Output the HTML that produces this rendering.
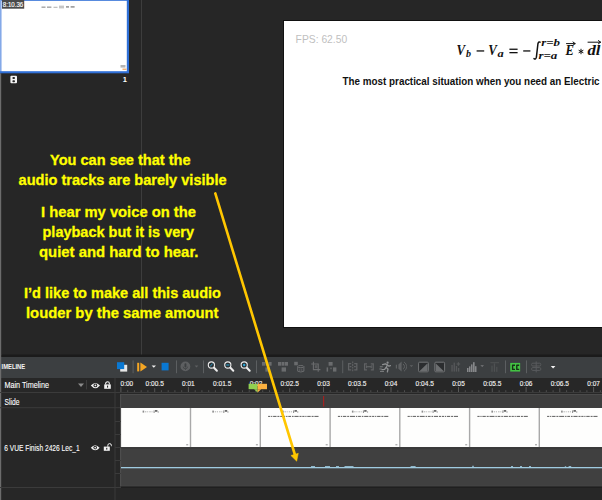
<!DOCTYPE html>
<html>
<head>
<meta charset="utf-8">
<title>Timeline audio question</title>
<style>
html,body{margin:0;padding:0;background:#262626;}
body{width:602px;height:500px;overflow:hidden;position:relative;font-family:"Liberation Sans",sans-serif;}
svg{position:absolute;left:0;top:0;display:block;}
text{font-family:"Liberation Sans",sans-serif;}
.ser{font-family:"Liberation Serif",serif;}
</style>
</head>
<body>
<svg width="602" height="500" viewBox="0 0 602 500">
  <!-- ===== base ===== -->
  <rect x="0" y="0" width="602" height="500" fill="#262626"/>
  <!-- left edge light line -->
  <rect x="0" y="73.3" width="1.2" height="427" fill="#6c6c6c"/>
  <!-- panel divider -->
  <rect x="141" y="0" width="1" height="355" fill="#3d3d3d"/>

  <!-- ===== slide thumbnail ===== -->
  <g id="thumb">
    <rect x="0" y="0" width="129" height="73.3" fill="#2f6fd6"/>
    <rect x="0" y="0" width="1.4" height="71.2" fill="#84a9e8"/>
    <rect x="1.4" y="0.8" width="125.4" height="70.4" fill="#ffffff"/>
    <rect x="2" y="0" width="22.2" height="8.7" fill="#4a4a4a"/>
    <text x="2.8" y="7" font-size="7.6" fill="#ffffff" stroke="#ffffff" stroke-width=".15" textLength="20.4" lengthAdjust="spacingAndGlyphs">8:10.36</text>
    <!-- mini formula -->
    <rect x="41.5" y="6.6" width="4" height="1.1" fill="#8a8a8a"/><rect x="47" y="6.6" width="4.4" height="1.1" fill="#8a8a8a"/>
    <rect x="53.5" y="6.8" width="4" height=".9" fill="#a5a5a5"/>
    <rect x="59" y="5.6" width="5" height="2.8" fill="#a0a0a0" opacity=".6"/>
    <rect x="66" y="6.2" width="3" height="1.4" fill="#8a8a8a"/><rect x="70.6" y="6.2" width="4" height="1.4" fill="#8a8a8a"/>
    <!-- corner mark -->
    <rect x="120.5" y="65" width="5" height="2.6" fill="#b5b5b5"/>
    <rect x="122.5" y="68.5" width="4" height="1.5" fill="#f0b27a"/>
    <!-- film icon + number -->
    <rect x="10.4" y="75.8" width="6.6" height="7.5" rx="1" fill="#f4f4f4"/>
    <rect x="12.4" y="77" width="2.6" height="2" rx=".9" fill="#262626"/>
    <rect x="12.4" y="80.2" width="2.6" height="2" rx=".9" fill="#262626"/>
    <text x="122.8" y="81.6" font-size="7.5" font-weight="bold" fill="#ffffff">1</text>
  </g>

  <!-- ===== canvas slide ===== -->
  <g id="slide">
    <rect x="283" y="20" width="319" height="308" fill="#111111"/>
    <rect x="284" y="21" width="318" height="306" fill="#ffffff"/>
    <text x="295.6" y="43.1" font-size="10.1" fill="#bfbfbf" textLength="51.6" lengthAdjust="spacingAndGlyphs">FPS: 62.50</text>
    <!-- formula -->
    <g class="ser" font-weight="bold" font-style="italic" fill="#111111">
      <text class="ser" x="456.6" y="54.6" font-size="13.6" textLength="8.6" lengthAdjust="spacingAndGlyphs">V</text>
      <text class="ser" x="466" y="57.4" font-size="10.6" textLength="5" lengthAdjust="spacingAndGlyphs">b</text>
      <text class="ser" x="488.2" y="54.6" font-size="13.6" textLength="8.6" lengthAdjust="spacingAndGlyphs">V</text>
      <text class="ser" x="497.4" y="57.4" font-size="10.6" textLength="6.2" lengthAdjust="spacingAndGlyphs">a</text>
      <text class="ser" x="541.2" y="45.8" font-size="9.8" textLength="18.8" lengthAdjust="spacingAndGlyphs">r=b</text>
      <text class="ser" x="538.4" y="59.4" font-size="9.8" textLength="19" lengthAdjust="spacingAndGlyphs">r=a</text>
      <text class="ser" x="565.6" y="54.6" font-size="13.6" textLength="8.4" lengthAdjust="spacingAndGlyphs">E</text>
      <text class="ser" x="587.4" y="54.6" font-size="13.6" textLength="13" lengthAdjust="spacingAndGlyphs">dl</text>
    </g>
    <g fill="#111111" stroke="none">
      <rect x="476.6" y="50.3" width="7.6" height="1.3"/>
      <rect x="509.4" y="48.6" width="8.2" height="1.3"/>
      <rect x="509.4" y="52" width="8.2" height="1.3"/>
      <rect x="523.2" y="50.3" width="7.2" height="1.3"/>
    </g>
    <path d="M534 58.6 q1.8 1.2 2.4 -1.4 l1.5 -13.2 q.5 -2.8 2.2 -1.8" fill="none" stroke="#111111" stroke-width="1.5" stroke-linecap="round"/>
    <!-- asterisk -->
    <g stroke="#111111" stroke-width="1" stroke-linecap="round">
      <path d="M581 49.2 v4.6 M579 50.4 l4 2.2 M583 50.4 l-4 2.2"/>
    </g>
    <!-- vector arrows -->
    <g stroke="#111111" stroke-width="1" fill="none" stroke-linecap="round" stroke-linejoin="round">
      <path d="M566.5 43.6 h8.6 M573 42 l2.2 1.6 l-2.2 1.6"/>
      <path d="M588 42.2 h12.6 M598.4 40.6 l2.2 1.6 l-2.2 1.6"/>
    </g>
    <text x="342.6" y="84.8" font-size="10.9" font-weight="bold" fill="#111111" textLength="257" lengthAdjust="spacingAndGlyphs">The most practical situation when you need an Electric</text>
  </g>

  <!-- ===== timeline panel ===== -->
  <g id="timeline">
    <rect x="0" y="354.5" width="602" height="2.5" fill="#1b1b1b"/>
    <rect x="0" y="357" width="602" height="21" fill="#3c3f41"/>
    <rect x="0" y="378" width="602" height="122" fill="#272727"/>
    <rect x="0" y="354" width="1.2" height="146" fill="#6c6c6c"/>
    <text x="1.6" y="369.3" font-size="7.3" font-weight="bold" fill="#f4f4f4" textLength="23.6" lengthAdjust="spacingAndGlyphs">IMELINE</text>
    <!-- grid lines -->
    <rect x="0" y="392" width="602" height="1" fill="#3b3b3b"/>
    <rect x="0" y="407.2" width="120.4" height="1" fill="#3b3b3b"/>
    <rect x="0" y="487" width="121" height="1" fill="#3b3b3b"/>
    <rect x="114.5" y="378" width="1" height="122" fill="#3b3b3b"/>
    <!-- ruler -->
    <g id="ruler" font-size="7.5" fill="#f0f0f0" stroke="#f0f0f0" stroke-width=".15">
      <g stroke="none"><rect x="120.4" y="387" width="1" height="5" fill="#5a5a5a"/><rect x="127.2" y="390.2" width="1" height="1.8" fill="#4e4e4e"/><rect x="133.9" y="390.2" width="1" height="1.8" fill="#4e4e4e"/><rect x="140.7" y="390.2" width="1" height="1.8" fill="#4e4e4e"/><rect x="147.4" y="390.2" width="1" height="1.8" fill="#4e4e4e"/><rect x="154.2" y="388.2" width="1" height="3.8" fill="#555555"/><rect x="160.9" y="390.2" width="1" height="1.8" fill="#4e4e4e"/><rect x="167.7" y="390.2" width="1" height="1.8" fill="#4e4e4e"/><rect x="174.4" y="390.2" width="1" height="1.8" fill="#4e4e4e"/><rect x="181.2" y="390.2" width="1" height="1.8" fill="#4e4e4e"/><rect x="187.9" y="387" width="1" height="5" fill="#5a5a5a"/><rect x="194.7" y="390.2" width="1" height="1.8" fill="#4e4e4e"/><rect x="201.4" y="390.2" width="1" height="1.8" fill="#4e4e4e"/><rect x="208.2" y="390.2" width="1" height="1.8" fill="#4e4e4e"/><rect x="214.9" y="390.2" width="1" height="1.8" fill="#4e4e4e"/><rect x="221.7" y="388.2" width="1" height="3.8" fill="#555555"/><rect x="228.4" y="390.2" width="1" height="1.8" fill="#4e4e4e"/><rect x="235.2" y="390.2" width="1" height="1.8" fill="#4e4e4e"/><rect x="242.0" y="390.2" width="1" height="1.8" fill="#4e4e4e"/><rect x="248.7" y="390.2" width="1" height="1.8" fill="#4e4e4e"/><rect x="255.5" y="387" width="1" height="5" fill="#5a5a5a"/><rect x="262.2" y="390.2" width="1" height="1.8" fill="#4e4e4e"/><rect x="269.0" y="390.2" width="1" height="1.8" fill="#4e4e4e"/><rect x="275.7" y="390.2" width="1" height="1.8" fill="#4e4e4e"/><rect x="282.5" y="390.2" width="1" height="1.8" fill="#4e4e4e"/><rect x="289.2" y="388.2" width="1" height="3.8" fill="#555555"/><rect x="296.0" y="390.2" width="1" height="1.8" fill="#4e4e4e"/><rect x="302.7" y="390.2" width="1" height="1.8" fill="#4e4e4e"/><rect x="309.5" y="390.2" width="1" height="1.8" fill="#4e4e4e"/><rect x="316.2" y="390.2" width="1" height="1.8" fill="#4e4e4e"/><rect x="323.0" y="387" width="1" height="5" fill="#5a5a5a"/><rect x="329.7" y="390.2" width="1" height="1.8" fill="#4e4e4e"/><rect x="336.5" y="390.2" width="1" height="1.8" fill="#4e4e4e"/><rect x="343.2" y="390.2" width="1" height="1.8" fill="#4e4e4e"/><rect x="350.0" y="390.2" width="1" height="1.8" fill="#4e4e4e"/><rect x="356.8" y="388.2" width="1" height="3.8" fill="#555555"/><rect x="363.5" y="390.2" width="1" height="1.8" fill="#4e4e4e"/><rect x="370.3" y="390.2" width="1" height="1.8" fill="#4e4e4e"/><rect x="377.0" y="390.2" width="1" height="1.8" fill="#4e4e4e"/><rect x="383.8" y="390.2" width="1" height="1.8" fill="#4e4e4e"/><rect x="390.5" y="387" width="1" height="5" fill="#5a5a5a"/><rect x="397.3" y="390.2" width="1" height="1.8" fill="#4e4e4e"/><rect x="404.0" y="390.2" width="1" height="1.8" fill="#4e4e4e"/><rect x="410.8" y="390.2" width="1" height="1.8" fill="#4e4e4e"/><rect x="417.5" y="390.2" width="1" height="1.8" fill="#4e4e4e"/><rect x="424.3" y="388.2" width="1" height="3.8" fill="#555555"/><rect x="431.0" y="390.2" width="1" height="1.8" fill="#4e4e4e"/><rect x="437.8" y="390.2" width="1" height="1.8" fill="#4e4e4e"/><rect x="444.5" y="390.2" width="1" height="1.8" fill="#4e4e4e"/><rect x="451.3" y="390.2" width="1" height="1.8" fill="#4e4e4e"/><rect x="458.0" y="387" width="1" height="5" fill="#5a5a5a"/><rect x="464.8" y="390.2" width="1" height="1.8" fill="#4e4e4e"/><rect x="471.6" y="390.2" width="1" height="1.8" fill="#4e4e4e"/><rect x="478.3" y="390.2" width="1" height="1.8" fill="#4e4e4e"/><rect x="485.1" y="390.2" width="1" height="1.8" fill="#4e4e4e"/><rect x="491.8" y="388.2" width="1" height="3.8" fill="#555555"/><rect x="498.6" y="390.2" width="1" height="1.8" fill="#4e4e4e"/><rect x="505.3" y="390.2" width="1" height="1.8" fill="#4e4e4e"/><rect x="512.1" y="390.2" width="1" height="1.8" fill="#4e4e4e"/><rect x="518.8" y="390.2" width="1" height="1.8" fill="#4e4e4e"/><rect x="525.6" y="387" width="1" height="5" fill="#5a5a5a"/><rect x="532.3" y="390.2" width="1" height="1.8" fill="#4e4e4e"/><rect x="539.1" y="390.2" width="1" height="1.8" fill="#4e4e4e"/><rect x="545.8" y="390.2" width="1" height="1.8" fill="#4e4e4e"/><rect x="552.6" y="390.2" width="1" height="1.8" fill="#4e4e4e"/><rect x="559.3" y="388.2" width="1" height="3.8" fill="#555555"/><rect x="566.1" y="390.2" width="1" height="1.8" fill="#4e4e4e"/><rect x="572.9" y="390.2" width="1" height="1.8" fill="#4e4e4e"/><rect x="579.6" y="390.2" width="1" height="1.8" fill="#4e4e4e"/><rect x="586.4" y="390.2" width="1" height="1.8" fill="#4e4e4e"/><rect x="593.1" y="387" width="1" height="5" fill="#5a5a5a"/><rect x="599.9" y="390.2" width="1" height="1.8" fill="#4e4e4e"/></g>
      <text x="120.6" y="386.2" textLength="12.6" lengthAdjust="spacingAndGlyphs">0:00</text>
      <text x="145.5" y="386.2" textLength="18.3" lengthAdjust="spacingAndGlyphs">0:00.5</text>
      <text x="182.1" y="386.2" textLength="12.6" lengthAdjust="spacingAndGlyphs">0:01</text>
      <text x="213.0" y="386.2" textLength="18.3" lengthAdjust="spacingAndGlyphs">0:01.5</text>
      <text x="249.7" y="386.2" textLength="12.6" lengthAdjust="spacingAndGlyphs">0:02</text>
      <text x="280.6" y="386.2" textLength="18.3" lengthAdjust="spacingAndGlyphs">0:02.5</text>
      <text x="317.2" y="386.2" textLength="12.6" lengthAdjust="spacingAndGlyphs">0:03</text>
      <text x="348.1" y="386.2" textLength="18.3" lengthAdjust="spacingAndGlyphs">0:03.5</text>
      <text x="384.7" y="386.2" textLength="12.6" lengthAdjust="spacingAndGlyphs">0:04</text>
      <text x="415.6" y="386.2" textLength="18.3" lengthAdjust="spacingAndGlyphs">0:04.5</text>
      <text x="452.2" y="386.2" textLength="12.6" lengthAdjust="spacingAndGlyphs">0:05</text>
      <text x="483.2" y="386.2" textLength="18.3" lengthAdjust="spacingAndGlyphs">0:05.5</text>
      <text x="519.8" y="386.2" textLength="12.6" lengthAdjust="spacingAndGlyphs">0:06</text>
      <text x="550.7" y="386.2" textLength="18.3" lengthAdjust="spacingAndGlyphs">0:06.5</text>
      <text x="587.3" y="386.2" textLength="12.6" lengthAdjust="spacingAndGlyphs">0:07</text>
    </g>
    <!-- slide track -->
    <rect x="121" y="394" width="481" height="14" fill="#3e3e3e"/>
    <rect x="121" y="394" width="481" height="1" fill="#4a4a4a"/>
    <rect x="323" y="396" width="1.2" height="10.5" fill="#a3201f"/>
    <!-- video frames -->
    <rect x="121" y="408" width="481" height="39.4" fill="#fefefd"/>
    <rect x="142.6" y="410.6" width="1.6" height="2" fill="#8a8a8a"/><path d="M145.0 411.8 h8" stroke="#b0b0b0" stroke-width="1" stroke-dasharray="1.4 .8 1 1.1 1.4 .8 1 .9" fill="none"/><rect x="153.6" y="410.4" width="1" height="2.6" fill="#8a8a8a"/><rect x="155.0" y="410" width="2.4" height="1.8" fill="#6a6a6a"/><rect x="157.6" y="411.4" width="1.2" height="1.2" fill="#9a9a9a"/>
    <rect x="186.2" y="444" width="2" height="1.4" fill="#b3b3b3"/>
    <rect x="189.8" y="408" width="1.4" height="39.4" fill="#a9a9a9"/>
    <rect x="212.3" y="410.6" width="1.6" height="2" fill="#8a8a8a"/><path d="M214.8 411.8 h8" stroke="#b0b0b0" stroke-width="1" stroke-dasharray="1.4 .8 1 1.1 1.4 .8 1 .9" fill="none"/><rect x="223.3" y="410.4" width="1" height="2.6" fill="#8a8a8a"/><rect x="224.8" y="410" width="2.4" height="1.8" fill="#6a6a6a"/><rect x="227.3" y="411.4" width="1.2" height="1.2" fill="#9a9a9a"/>
    <rect x="255.9" y="444" width="2" height="1.4" fill="#b3b3b3"/>
    <rect x="259.6" y="408" width="1.4" height="39.4" fill="#a9a9a9"/>
    <rect x="282.1" y="410.6" width="1.6" height="2" fill="#8a8a8a"/><path d="M284.5 411.8 h8" stroke="#b0b0b0" stroke-width="1" stroke-dasharray="1.4 .8 1 1.1 1.4 .8 1 .9" fill="none"/><rect x="293.1" y="410.4" width="1" height="2.6" fill="#8a8a8a"/><rect x="294.5" y="410" width="2.4" height="1.8" fill="#6a6a6a"/><rect x="297.1" y="411.4" width="1.2" height="1.2" fill="#9a9a9a"/>
    <path d="M268.1 416.4 h50.4" stroke="#4a4a4a" stroke-width=".9" stroke-dasharray="2.2 .8 1.2 .8 3.4 .9 2 .8 5 .9 1.4 .8 2.8 .9 1.6 .8 4.2 .9 2 .8" fill="none"/>
    <rect x="325.7" y="444" width="2" height="1.4" fill="#b3b3b3"/>
    <rect x="329.4" y="408" width="1.4" height="39.4" fill="#a9a9a9"/>
    <rect x="351.9" y="410.6" width="1.6" height="2" fill="#8a8a8a"/><path d="M354.2 411.8 h8" stroke="#b0b0b0" stroke-width="1" stroke-dasharray="1.4 .8 1 1.1 1.4 .8 1 .9" fill="none"/><rect x="362.9" y="410.4" width="1" height="2.6" fill="#8a8a8a"/><rect x="364.2" y="410" width="2.4" height="1.8" fill="#6a6a6a"/><rect x="366.9" y="411.4" width="1.2" height="1.2" fill="#9a9a9a"/>
    <path d="M337.9 416.4 h50.4" stroke="#4a4a4a" stroke-width=".9" stroke-dasharray="2.2 .8 1.2 .8 3.4 .9 2 .8 5 .9 1.4 .8 2.8 .9 1.6 .8 4.2 .9 2 .8" fill="none"/>
    <rect x="395.4" y="444" width="2" height="1.4" fill="#b3b3b3"/>
    <rect x="399.1" y="408" width="1.4" height="39.4" fill="#a9a9a9"/>
    <rect x="421.6" y="410.6" width="1.6" height="2" fill="#8a8a8a"/><path d="M424.0 411.8 h8" stroke="#b0b0b0" stroke-width="1" stroke-dasharray="1.4 .8 1 1.1 1.4 .8 1 .9" fill="none"/><rect x="432.6" y="410.4" width="1" height="2.6" fill="#8a8a8a"/><rect x="434.0" y="410" width="2.4" height="1.8" fill="#6a6a6a"/><rect x="436.6" y="411.4" width="1.2" height="1.2" fill="#9a9a9a"/>
    <path d="M407.6 416.4 h50.4" stroke="#4a4a4a" stroke-width=".9" stroke-dasharray="2.2 .8 1.2 .8 3.4 .9 2 .8 5 .9 1.4 .8 2.8 .9 1.6 .8 4.2 .9 2 .8" fill="none"/>
    <rect x="465.2" y="444" width="2" height="1.4" fill="#b3b3b3"/>
    <rect x="468.9" y="408" width="1.4" height="39.4" fill="#a9a9a9"/>
    <rect x="491.4" y="410.6" width="1.6" height="2" fill="#8a8a8a"/><path d="M493.8 411.8 h8" stroke="#b0b0b0" stroke-width="1" stroke-dasharray="1.4 .8 1 1.1 1.4 .8 1 .9" fill="none"/><rect x="502.4" y="410.4" width="1" height="2.6" fill="#8a8a8a"/><rect x="503.8" y="410" width="2.4" height="1.8" fill="#6a6a6a"/><rect x="506.4" y="411.4" width="1.2" height="1.2" fill="#9a9a9a"/>
    <path d="M477.4 416.4 h50.4" stroke="#4a4a4a" stroke-width=".9" stroke-dasharray="2.2 .8 1.2 .8 3.4 .9 2 .8 5 .9 1.4 .8 2.8 .9 1.6 .8 4.2 .9 2 .8" fill="none"/>
    <rect x="535.0" y="444" width="2" height="1.4" fill="#b3b3b3"/>
    <rect x="538.6" y="408" width="1.4" height="39.4" fill="#a9a9a9"/>
    <rect x="561.1" y="410.6" width="1.6" height="2" fill="#8a8a8a"/><path d="M563.5 411.8 h8" stroke="#b0b0b0" stroke-width="1" stroke-dasharray="1.4 .8 1 1.1 1.4 .8 1 .9" fill="none"/><rect x="572.1" y="410.4" width="1" height="2.6" fill="#8a8a8a"/><rect x="573.5" y="410" width="2.4" height="1.8" fill="#6a6a6a"/><rect x="576.1" y="411.4" width="1.2" height="1.2" fill="#9a9a9a"/>
    <path d="M547.1 416.4 h50.4" stroke="#4a4a4a" stroke-width=".9" stroke-dasharray="2.2 .8 1.2 .8 3.4 .9 2 .8 5 .9 1.4 .8 2.8 .9 1.6 .8 4.2 .9 2 .8" fill="none"/>
    <rect x="604.7" y="444" width="2" height="1.4" fill="#b3b3b3"/>
    <rect x="608.4" y="408" width="1.4" height="39.4" fill="#a9a9a9"/>
    <rect x="630.9" y="410.6" width="1.6" height="2" fill="#8a8a8a"/><path d="M633.2 411.8 h8" stroke="#b0b0b0" stroke-width="1" stroke-dasharray="1.4 .8 1 1.1 1.4 .8 1 .9" fill="none"/><rect x="641.9" y="410.4" width="1" height="2.6" fill="#8a8a8a"/><rect x="643.2" y="410" width="2.4" height="1.8" fill="#6a6a6a"/><rect x="645.9" y="411.4" width="1.2" height="1.2" fill="#9a9a9a"/>
    <path d="M616.9 416.4 h50.4" stroke="#4a4a4a" stroke-width=".9" stroke-dasharray="2.2 .8 1.2 .8 3.4 .9 2 .8 5 .9 1.4 .8 2.8 .9 1.6 .8 4.2 .9 2 .8" fill="none"/>
    <rect x="674.5" y="444" width="2" height="1.4" fill="#b3b3b3"/>
    <!-- audio -->
    <rect x="121" y="447.2" width="481" height="1.1" fill="#2c2c2c"/>
    <rect x="121" y="448.2" width="481" height="38.3" fill="#404040"/>
    <rect x="121" y="485.7" width="481" height=".8" fill="#4b4b4b"/>
    <rect x="121" y="486.5" width="481" height="1.5" fill="#1f1f1f"/>
    <rect x="120.2" y="394" width=".9" height="92.5" fill="#585858"/>
    <rect x="121" y="467" width="481" height="1.3" fill="#9fcbe0"/>
    <!-- tiny waveform bumps -->
    <g fill="#9fcbe0" opacity=".85">
      <rect x="311" y="466" width="4" height="1"/><rect x="325" y="466" width="5" height="1"/><rect x="336" y="466" width="3" height="1"/><rect x="344.5" y="466" width="9" height="1"/>
      <rect x="410.6" y="466" width="5" height="1"/><rect x="472" y="465.8" width="2" height="1"/><rect x="511" y="466" width="2" height="1"/><rect x="520" y="466" width="2" height="1"/><rect x="529" y="466" width="2" height="1"/><rect x="564.8" y="466.2" width="1.4" height="1"/><rect x="568.6" y="466" width="2.6" height="1.2"/>
    </g>
    <!-- small scale ticks -->
    <g fill="#3b3b3b"><rect x="115" y="421" width="6" height="1"/><rect x="115" y="434" width="6" height="1"/><rect x="115" y="447" width="6" height="1"/><rect x="115" y="460" width="6" height="1"/><rect x="115" y="473" width="6" height="1"/></g>
    <!-- left labels -->
    <g font-size="8.7" fill="#ffffff" stroke="#ffffff" stroke-width=".1">
      <text x="4.4" y="388" textLength="44.6" lengthAdjust="spacingAndGlyphs">Main Timeline</text>
      <text x="4.4" y="404.6" textLength="15" lengthAdjust="spacingAndGlyphs">Slide</text>
      <text x="4.2" y="451.2" textLength="75.6" lengthAdjust="spacingAndGlyphs">6 VUE Finish 2426 Lec_1</text>
    </g>
  </g>

  <!-- ===== yellow annotation ===== -->
  <g id="note" font-weight="bold" font-size="15.2" fill="#ffff00" stroke="#ffff00" stroke-width=".3">
    <text x="50" y="164.8" textLength="140.6" lengthAdjust="spacingAndGlyphs">You can see that the</text>
    <text x="18.6" y="185" textLength="208" lengthAdjust="spacingAndGlyphs">audio tracks are barely visible</text>
    <text x="41" y="216.9" textLength="155" lengthAdjust="spacingAndGlyphs">I hear my voice on the</text>
    <text x="42.5" y="236.8" textLength="151.5" lengthAdjust="spacingAndGlyphs">playback but it is very</text>
    <text x="39" y="256.6" textLength="159.5" lengthAdjust="spacingAndGlyphs">quiet and hard to hear.</text>
    <text x="24" y="297.6" textLength="197" lengthAdjust="spacingAndGlyphs">I’d like to make all this audio</text>
    <text x="26" y="318.3" textLength="192.5" lengthAdjust="spacingAndGlyphs">louder by the same amount</text>
  </g>
  <!-- ===== toolbar icons ===== -->
  <g id="tools">
    <!-- layers icon -->
    <rect x="120.2" y="364.8" width="7" height="6.8" fill="#e6e6e6"/>
    <rect x="117" y="362.2" width="7.2" height="6.9" fill="#0a78d2"/>
    <rect x="132.6" y="360.4" width="1" height="12.8" fill="#5c5f61"/>
    <!-- play -->
    <rect x="137.2" y="362.8" width="2" height="8.6" fill="#f5a623"/>
    <path d="M140.4 362.6 L147 367.1 L140.4 371.6 Z" fill="#f5a623"/>
    <path d="M151.6 365.4 h4.4 l-2.2 2.4 z" fill="#f0f0f0"/>
    <!-- stop -->
    <rect x="161.6" y="362.8" width="7" height="7.6" fill="#0a78d2"/>
    <rect x="176" y="360.4" width="1" height="12.8" fill="#5c5f61"/>
    <!-- mic (disabled) -->
    <circle cx="185.4" cy="366.4" r="4.9" fill="#5d5f61"/>
    <rect x="184.5" y="363.2" width="1.9" height="4.2" rx=".9" fill="#3c3f41"/>
    <path d="M183.2 366.6 a2.2 2.2 0 0 0 4.4 0" fill="none" stroke="#3c3f41" stroke-width=".7"/>
    <rect x="185.1" y="368.6" width=".7" height="1.3" fill="#3c3f41"/>
    <path d="M194.6 365.4 h3.8 l-1.9 2 z" fill="#5d5f61"/>
    <rect x="203" y="360.4" width="1" height="12.8" fill="#5c5f61"/>
    <!-- magnifiers -->
    <g id="mag1">
      <path d="M213.8 367.5 L216.9 370.7" stroke="#ededed" stroke-width="2" stroke-linecap="round"/>
      <circle cx="211.4" cy="365" r="3.1" fill="#2b3033" stroke="#ececec" stroke-width="1.1"/>
      <path d="M210.2 366.2 l2.4 -2.4" stroke="#2aa7d8" stroke-width="1"/>
    </g>
    <g id="mag2">
      <path d="M230.2 367.5 L233.3 370.7" stroke="#ededed" stroke-width="2" stroke-linecap="round"/>
      <circle cx="227.8" cy="365" r="3.1" fill="#2b3033" stroke="#ececec" stroke-width="1.1"/>
      <rect x="226.2" y="364.5" width="3.2" height="1" fill="#2aa7d8"/>
    </g>
    <g id="mag3">
      <path d="M246.6 367.5 L249.7 370.7" stroke="#ededed" stroke-width="2" stroke-linecap="round"/>
      <circle cx="244.2" cy="365" r="3.1" fill="#2b3033" stroke="#ececec" stroke-width="1.1"/>
      <circle cx="244.2" cy="365" r="1.2" fill="#2aa7d8"/>
    </g>
    <rect x="256" y="360.4" width="1" height="12.8" fill="#5c5f61"/>
    <!-- disabled block icons -->
    <g fill="#6a6c6e">
      <rect x="262" y="362" width="3" height="3.7"/><rect x="265.5" y="362" width="3" height="3.7"/><rect x="269" y="362" width="2.6" height="3.7"/>
      <rect x="265.4" y="367.4" width="4.2" height="4.2"/>
      <rect x="278" y="362" width="3" height="3.7"/><rect x="281.5" y="362" width="3" height="3.7"/><rect x="285" y="362" width="3" height="3.7"/>
      <rect x="281.6" y="367.4" width="4.4" height="4.2"/>
      <rect x="294.2" y="361.8" width="3.6" height="3.5"/>
      <rect x="328.6" y="362" width="4" height="3.7"/>
      <rect x="326.6" y="367.4" width="1.5" height="4.2"/><rect x="330.4" y="367.6" width="1.2" height="1.6"/><rect x="333" y="367.4" width="3.4" height="4.2"/>
    </g>
    <!-- trash -->
    <g fill="none" stroke="#6a6c6e" stroke-width="1">
      <ellipse cx="300.8" cy="366.6" rx="3.1" ry="1.1"/>
      <path d="M297.7 366.6 v4.6 q3.1 1.6 6.2 0 v-4.6"/>
      <path d="M299.8 368.6 v2.4 M301.8 368.6 v2.4" stroke-width=".7"/>
    </g>
    <!-- crop -->
    <g fill="none" stroke="#6a6c6e" stroke-width="1.1">
      <path d="M313.4 361.8 v7.8 h7 M311.2 364 h7 v7.8"/>
      <rect x="314.8" y="365.2" width="2.6" height="3" fill="#5a5c5e" stroke="none"/>
    </g>
    <rect x="342.2" y="360.4" width="1" height="12.8" fill="#5c5f61"/>
    <!-- split -->
    <g fill="none" stroke="#606264" stroke-width="1.3">
      <path d="M351.2 363.6 h-2.6 v6.2 h2.6 M354.2 363.6 h2.6 v6.2 h-2.6"/>
      <path d="M352.7 361.4 v10.6" stroke-dasharray="1.8 .9" stroke-width="1.1"/>
      <path d="M349.6 366.7 h1.8 M354 366.7 h1.8" stroke-width="1.2"/>
    </g>
    <!-- join -->
    <g fill="none" stroke="#606264" stroke-width="1.3">
      <path d="M367 363.8 h-2.4 v6 h2.4 M370.8 363.8 h2.4 v6 h-2.4"/>
      <path d="M366 364.9 l2.2 1.8 l-2.2 1.8 z M371.8 364.9 l-2.2 1.8 l2.2 1.8 z" fill="#606264" stroke="none"/>
      <path d="M367.6 366.7 h2.6" stroke-width="1.2"/>
    </g>
    <!-- runner -->
    <g fill="none" stroke="#8e9092" stroke-width="1.3" stroke-linecap="round" stroke-linejoin="round">
      <circle cx="387.6" cy="362.7" r="1.1" fill="#8e9092" stroke="none"/>
      <path d="M382.6 364.6 l2.8 -.8 l2 1.2 l-1.2 2.6 l1.8 1.4 l-.6 2.8"/>
      <path d="M386.2 367.4 l-1.6 2 l-2.6 .2"/>
      <path d="M387.4 365 l1.6 1.2 l1.4 -.6"/>
      <path d="M380.2 366.8 h2.2 M379.8 369 h1.6 M380.4 371.4 h3.2" stroke-width=".8"/>
    </g>
    <!-- volume -->
    <g fill="none" stroke="#5f6163" stroke-width="1">
      <path d="M396.4 364.8 v3.6" stroke-width="1.2"/>
      <path d="M401.6 361.6 v10 l-3.2 -2.8 v-4.4 z" fill="#5f6163" stroke="none"/>
      <path d="M403 364 a3 3 0 0 1 0 5.2"/>
      <path d="M404 362 a5.4 5.4 0 0 1 0 9.2"/>
    </g>
    <path d="M409.6 365.2 h3.6 l-1.8 1.9 z" fill="#5f6163"/>
    <!-- fade in / fade out -->
    <rect x="418.6" y="362.2" width="9.8" height="9.6" rx="1" fill="#2b2d2f" stroke="#737577" stroke-width="1"/>
    <path d="M419.6 371 L427.6 363.2 V371 Z" fill="#6c6e70"/>
    <rect x="434.8" y="362.2" width="9.8" height="9.6" rx="1" fill="#2b2d2f" stroke="#737577" stroke-width="1"/>
    <path d="M435.6 363.2 L443.6 371 H435.6 Z" fill="#6c6e70"/>
    <!-- bars + -->
    <g fill="#56585a">
      <rect x="451.4" y="365" width="1.3" height="6.6"/><rect x="453.6" y="362.6" width="1.3" height="9"/><rect x="455.8" y="366" width="1.3" height="5.6"/><rect x="458" y="368" width="1.3" height="3.6"/>
      <rect x="456.6" y="363.4" width="3.6" height="1.2"/><rect x="457.8" y="362.2" width="1.2" height="3.6"/>
    </g>
    <!-- bars ascending -->
    <g fill="#999b9d">
      <rect x="467.2" y="368" width="1.2" height="4"/><rect x="469.2" y="366.4" width="1.2" height="5.6"/><rect x="471.2" y="364.4" width="1.2" height="7.6"/><rect x="473.2" y="362.2" width="1.3" height="9.8"/><rect x="475.2" y="366.2" width="1.2" height="5.8"/>
    </g>
    <path d="M480.4 365.2 h3.6 l-1.8 1.9 z" fill="#77797b"/>
    <!-- bars T dim -->
    <g fill="#4f5153">
      <rect x="490.4" y="362.2" width="8.6" height="1"/><rect x="491.4" y="365.6" width="1.2" height="6.2"/><rect x="493.8" y="363.4" width="1.3" height="8.4"/><rect x="496.2" y="366.8" width="1.2" height="5"/>
    </g>
    <rect x="505" y="360.4" width="1" height="12.8" fill="#5c5f61"/>
    <!-- CC -->
    <rect x="509.8" y="362" width="10.6" height="10" fill="#3a2f45"/>
    <rect x="510.2" y="362.8" width="10" height="8.8" fill="#43c343"/>
    <path d="M515 365.2 h-2.4 v4.2 h2.4 M519.2 365.2 h-2.4 v4.2 h2.4" fill="none" stroke="#173017" stroke-width="1.4" stroke-linejoin="round"/>
    <rect x="526" y="360.4" width="1" height="12.8" fill="#5c5f61"/>
    <!-- snap icon dim -->
    <g fill="none" stroke="#595b5d" stroke-width="1">
      <rect x="531.6" y="363.2" width="9.2" height="2.8" rx="1.2"/>
      <rect x="531.6" y="367.6" width="9.2" height="2.8" rx="1.2"/>
      <path d="M536.2 361.4 v11"/>
    </g>
    <path d="M550.8 366 h4.6 l-2.3 2.5 z" fill="#f4f4f4"/>
  </g>

  <!-- ===== left column icons ===== -->
  <g id="lefticons">
    <path d="M78 383.4 h6 l-3 3.6 z" fill="#8c8c8c"/>
    <rect x="86" y="380" width="1" height="9.4" fill="#3d3d3d"/>
    <!-- eye 1 -->
    <path d="M90.8 385.6 q4.6 -5.4 9.2 0 q-4.6 5.4 -9.2 0 z" fill="#f2f2f2"/>
    <circle cx="95.4" cy="385.4" r="1.9" fill="#272727"/>
    <circle cx="95.4" cy="385.4" r=".9" fill="#f2f2f2"/>
    <!-- lock closed -->
    <path d="M105.6 384.6 v-.9 a1.9 1.9 0 0 1 3.8 0 v.9" fill="none" stroke="#f2f2f2" stroke-width="1.1"/>
    <rect x="104.2" y="384.4" width="6.6" height="4.4" fill="#f2f2f2"/>
    <rect x="107" y="385.6" width="1.1" height="2" fill="#272727"/>
    <!-- eye 2 -->
    <path d="M90.8 447.8 q4.4 -5 8.8 0 q-4.4 5 -8.8 0 z" fill="#f2f2f2"/>
    <circle cx="95.2" cy="447.6" r="1.8" fill="#272727"/>
    <circle cx="95.2" cy="447.6" r=".85" fill="#f2f2f2"/>
    <!-- lock open -->
    <path d="M107.8 446.8 v-1.4 a1.8 1.8 0 0 1 3.6 0 v.8" fill="none" stroke="#f2f2f2" stroke-width="1"/>
    <rect x="103.8" y="446.6" width="6" height="4.2" fill="#f2f2f2"/>
    <rect x="106.2" y="447.8" width="1.1" height="1.8" fill="#272727"/>
  </g>

  <!-- ===== playhead marker ===== -->
  <g id="playhead">
    <rect x="248.6" y="383.8" width="9" height="5.4" fill="#92d050"/>
    <rect x="257.6" y="383.8" width="9.4" height="5.4" fill="#fbb040"/>
    <path d="M254 389.2 H257.6 V392.6 Z" fill="#92d050"/>
    <path d="M257.6 389.2 H261.2 L257.6 392.6 Z" fill="#fbb040"/>
  </g>

  <!-- ===== arrow ===== -->
  <g id="arrow">
    <path d="M215.3 193.4 L295 455" stroke="#ffc600" stroke-width="2.6" fill="none" stroke-linecap="round"/>
    <path d="M290.9 455.5 L296.7 461.2 L298.3 453.3 Z" fill="#ffc600" stroke="#ffc600" stroke-width=".5" stroke-linejoin="round"/>
  </g>
</svg>
</body>
</html>
